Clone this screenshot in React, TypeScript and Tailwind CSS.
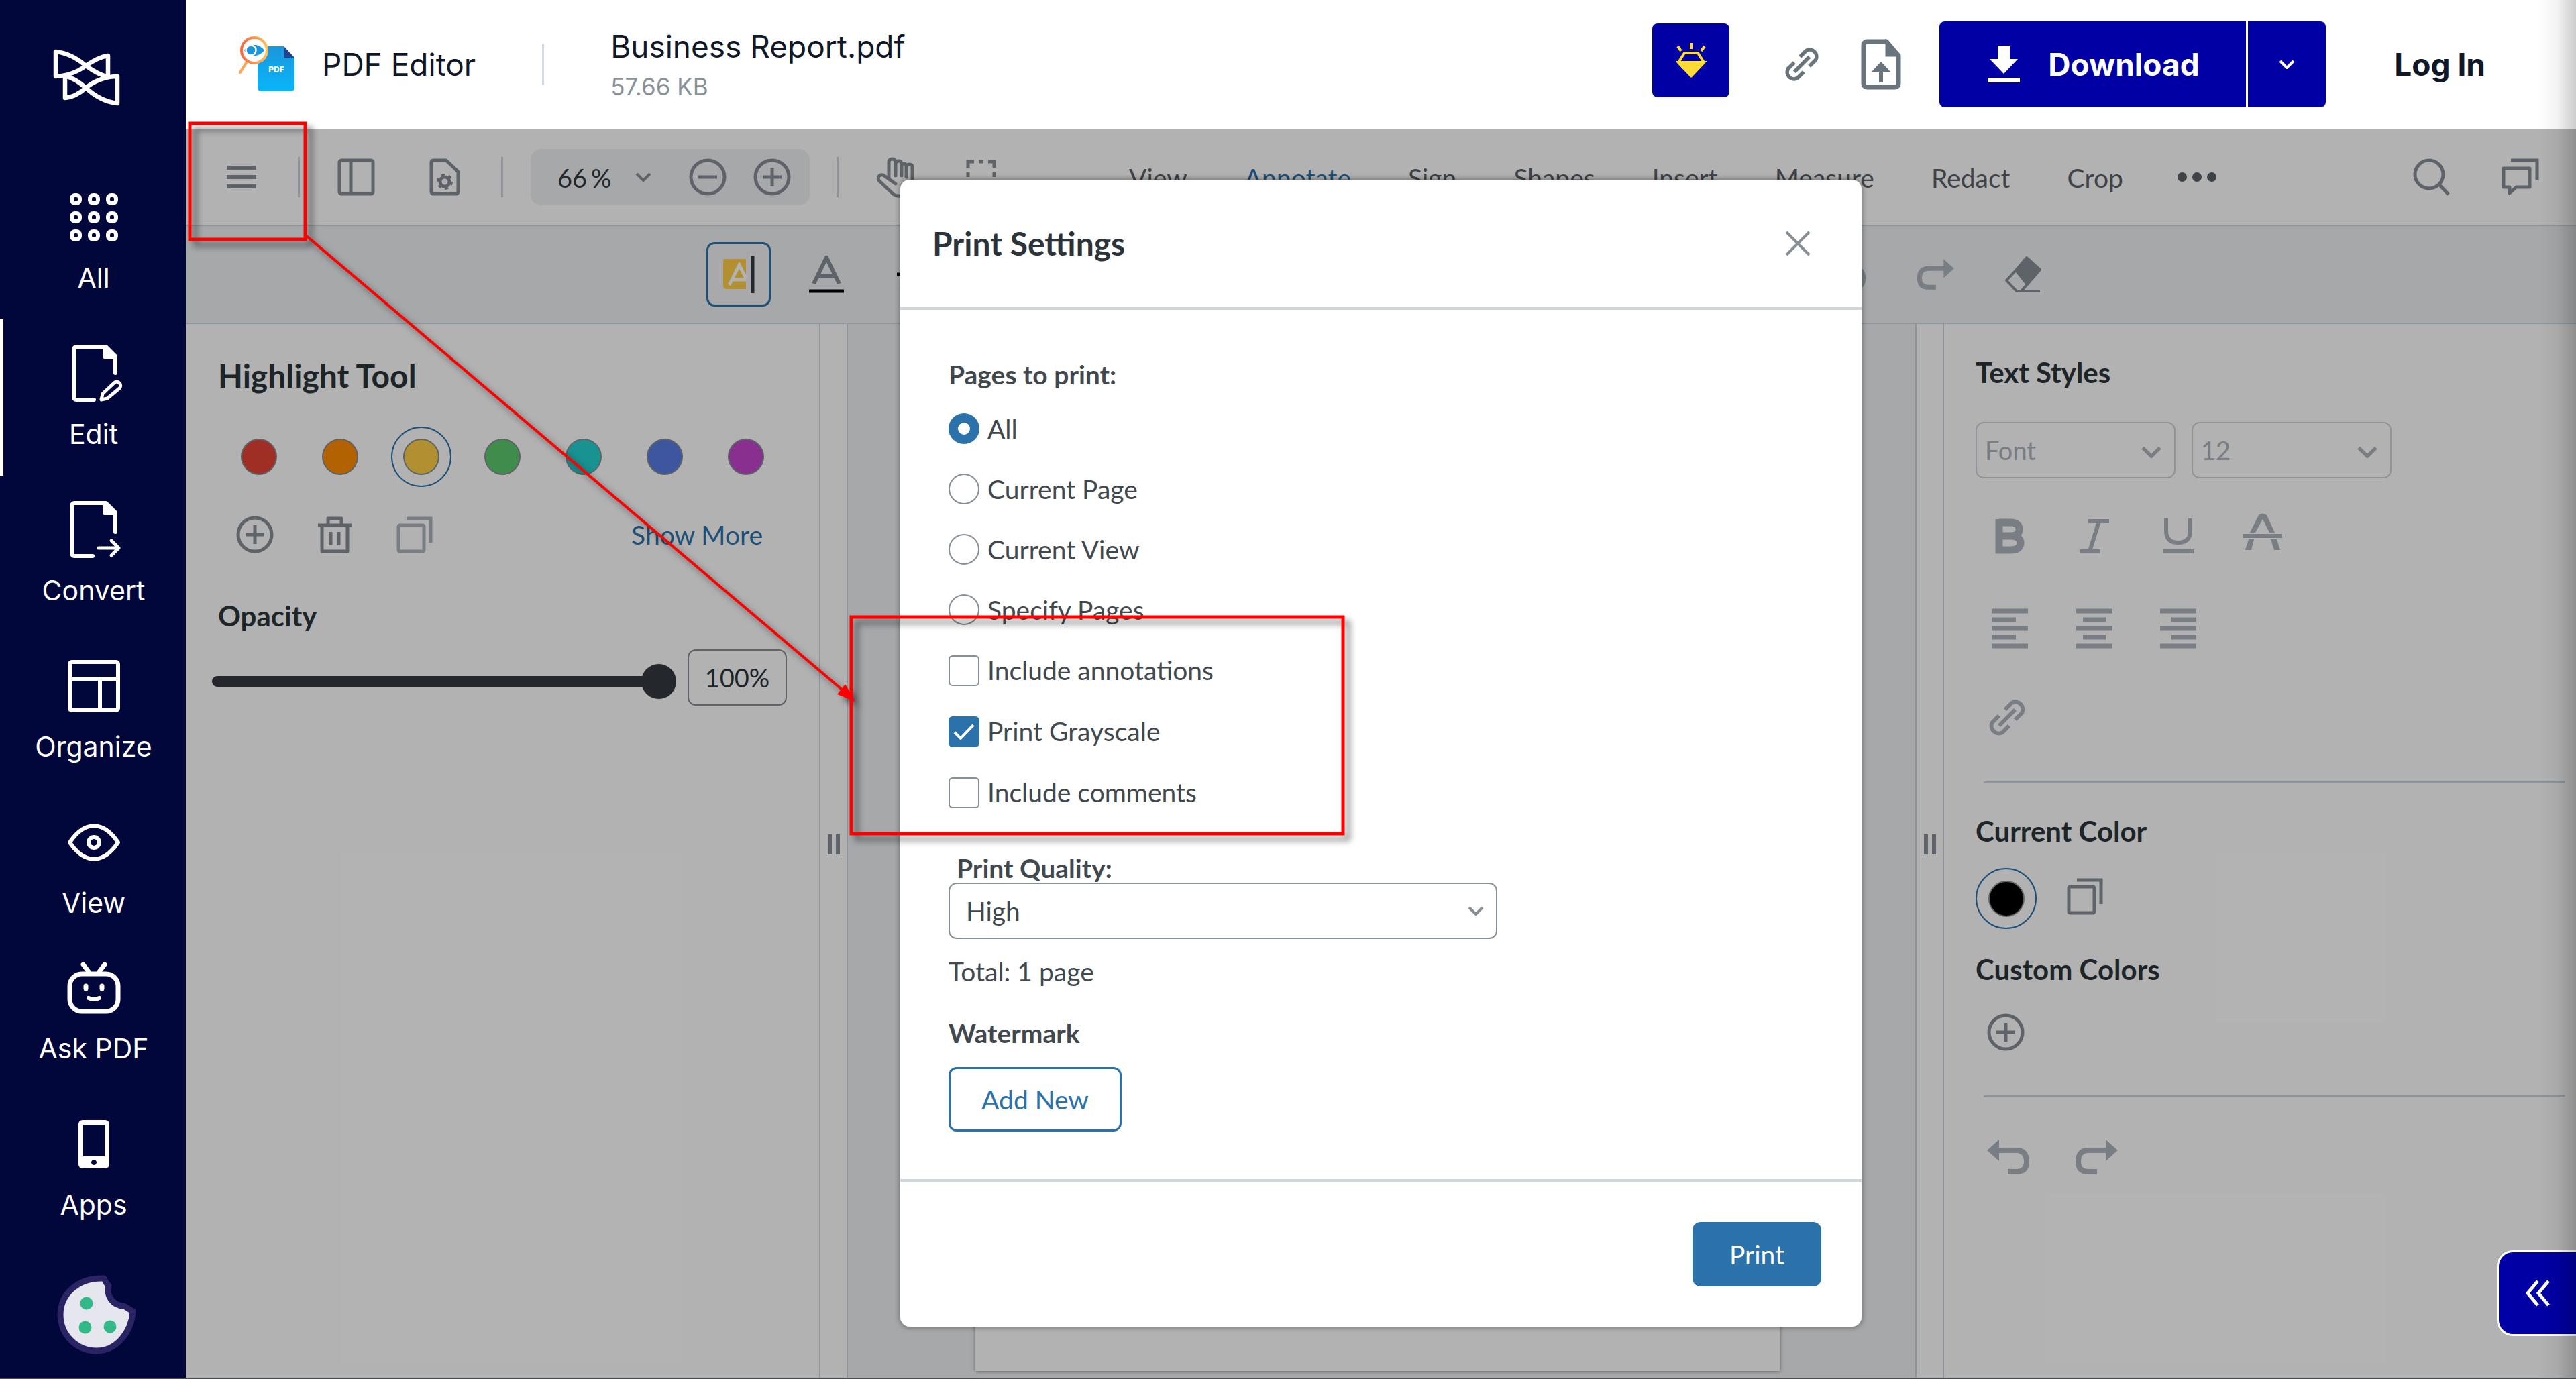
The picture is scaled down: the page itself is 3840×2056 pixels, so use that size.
import React, { useState } from 'react';

type IconProps = { className?: string };

const LogoMark = () => (
  <svg className="h-[85px] w-[100px]" viewBox="0 0 100 85" fill="none" stroke="white" strokeWidth="6.5" strokeLinejoin="round">
    <path d="M4 4C22 6 36 14 49 25C60 33 71 39 82 42V10C69 12 59 18 49 25C36 35 20 40 4 41Z" />
    <path d="M96 81C78 79 62 70 49 58C40 50 29 43 18 40V73C30 72 40 66 49 58C62 47 80 41 96 41Z" />
  </svg>
);

const GridIcon = () => (
  <svg className="size-[72px]" viewBox="0 0 72 72" fill="none" stroke="white" strokeWidth="6">
    {[9, 36, 63].map((y) =>
      [9, 36, 63].map((x) => <rect key={`${x}-${y}`} x={x - 6} y={y - 6} width="12" height="12" rx="5" />)
    )}
  </svg>
);

const EditIcon = () => (
  <svg className="h-[90px] w-[90px]" viewBox="-9 0 90 90" fill="none" stroke="white" strokeWidth="6" strokeLinecap="round" strokeLinejoin="round">
    <path d="M68 44V19L54 5H10a4 4 0 0 0-4 4V80a4 4 0 0 0 4 4H36" />
    <path d="M52 6V20H67Z" fill="white" />
    <path d="M47 84L49 75L66 59a5 5 0 0 1 8 8L56 82Z" strokeWidth="5" />
  </svg>
);

const ConvertIcon = () => (
  <svg className="h-[90px] w-[84px]" viewBox="-4 0 84 90" fill="none" stroke="white" strokeWidth="6" strokeLinecap="round" strokeLinejoin="round">
    <path d="M70 48V19L56 5H9a4 4 0 0 0-4 4V80a4 4 0 0 0 4 4H36" />
    <path d="M54 6V20H69Z" fill="white" />
    <path d="M45 72H75M64 61L75 72L64 83" strokeWidth="5" />
  </svg>
);

const OrganizeIcon = () => (
  <svg className="size-[78px]" viewBox="0 0 78 78" fill="none" stroke="white" strokeWidth="6">
    <rect x="3" y="3" width="72" height="72" rx="3" />
    <path d="M3 28H75M48 28V75" />
  </svg>
);

const EyeIcon = () => (
  <svg className="h-[56px] w-[80px]" viewBox="0 0 80 56" fill="none" stroke="white" strokeWidth="6" strokeLinejoin="round">
    <path d="M4 28C26 -5 54 -5 76 28C54 61 26 61 4 28Z" />
    <circle cx="40" cy="28" r="8" />
  </svg>
);

const BotIcon = () => (
  <svg className="size-[82px]" viewBox="0 0 82 82" fill="none" stroke="white" strokeWidth="7" strokeLinecap="round">
    <rect x="5" y="20" width="72" height="56" rx="18" />
    <path d="M25 6L34 18M57 6L48 18" />
    <path d="M29 38v4M53 38v4" />
    <path d="M33 56q8 4 16 0" strokeWidth="6" />
  </svg>
);

const PhoneIcon = () => (
  <svg className="h-[72px] w-[46px]" viewBox="0 0 46 72">
    <path fill="white" fillRule="evenodd" d="M6 0H40a6 6 0 0 1 6 6V66a6 6 0 0 1-6 6H6a6 6 0 0 1-6-6V6a6 6 0 0 1 6-6ZM7 7V54H39V7ZM23 59a4 4 0 1 0 .01 0Z" />
  </svg>
);

const CookieIcon = () => (
  <svg className="size-[120px]" viewBox="0 0 120 120">
    <path
      d="M71 6C72 8 73 12 78 17C74 32 84 46 100 47C104 48 108 52 114 55C112 86 90 114 60 114C30 114 6 90 6 60C6 30 32 4 71 6Z"
      fill="#e6e7ee" stroke="#2a2364" strokeWidth="9" strokeLinejoin="round"
    />
    <circle cx="45" cy="43" r="9.5" fill="#31ba87" />
    <circle cx="43" cy="79" r="9.5" fill="#31ba87" />
    <circle cx="80" cy="78" r="9.5" fill="#31ba87" />
  </svg>
);

const PdfEditorIcon = () => (
  <svg className="size-[84px]" viewBox="0 0 84 84">
    <defs>
      <linearGradient id="doc" x1="0" y1="0" x2="0" y2="1">
        <stop offset="0" stopColor="#1c96dc" />
        <stop offset="1" stopColor="#08b6f8" />
      </linearGradient>
      <linearGradient id="lens" x1="0" y1="0" x2="1" y2="0">
        <stop offset="0" stopColor="#f9693f" />
        <stop offset="1" stopColor="#fbc05e" />
      </linearGradient>
    </defs>
    <path d="M30 15H67L83 32V77a5 5 0 0 1-5 5H33a5 5 0 0 1-5-5V17Z" fill="url(#doc)" />
    <path d="M67 15L83 32H69a2 2 0 0 1-2-2Z" fill="#1f4391" />
    <text x="56" y="54" textAnchor="middle" fontSize="12" fontWeight="800" fill="white" fontFamily="Inter, sans-serif">PDF</text>
    <path d="M12 38L2 54" stroke="#fba558" strokeWidth="4" strokeLinecap="round" />
    <circle cx="23" cy="21" r="19" fill="white" stroke="url(#lens)" strokeWidth="4" />
    <path d="M8 21C14 10 30 10 38 21C30 32 14 32 8 21Z" fill="#1a96dc" />
    <circle cx="18" cy="21" r="7.5" fill="#1a96dc" stroke="white" strokeWidth="2.5" />
  </svg>
);

const BulbIcon = () => (
  <svg className="h-[52px] w-[46px]" viewBox="0 0 46 52" fill="none" stroke="#ffdb33" strokeWidth="4">
    <path d="M13 15H33L42 29L23 49L4 29Z" strokeLinejoin="round" />
    <path d="M4 29H42L23 49Z" fill="#ffdb33" />
    <path d="M23 0V9M3 5L8 12M43 5L38 12" />
  </svg>
);

const LinkIcon = ({ className }: IconProps) => (
  <svg className={className} viewBox="0 0 60 60" fill="none" stroke="currentColor" strokeWidth="6">
    <path d="M27 18L37 8a11 11 0 0 1 15 15L42 33" />
    <path d="M33 42L23 52a11 11 0 0 1-15-15L18 27" />
    <path d="M18 42L42 18" />
  </svg>
);

const UploadIcon = () => (
  <svg className="h-[76px] w-[60px]" viewBox="0 0 60 76" fill="none" stroke="#69747c" strokeWidth="7">
    <path d="M38 4H9a5 5 0 0 0-5 5V67a5 5 0 0 0 5 5H51a5 5 0 0 0 5-5V25Z" strokeLinejoin="round" />
    <path d="M38 3V25H56Z" fill="#69747c" strokeWidth="3" />
    <path d="M30 65V42" strokeWidth="6" />
    <path d="M15 50L30 34L45 50Z" fill="#69747c" stroke="none" />
  </svg>
);

const DownloadIcon = () => (
  <svg className="h-[56px] w-[48px]" viewBox="0 0 48 56" fill="white">
    <path d="M15 0H33V20H45L24 42L3 20H15ZM0 48H48V55H0Z" />
  </svg>
);

const Chevron = ({ className }: IconProps) => (
  <svg className={className} viewBox="0 0 24 14" fill="none" stroke="currentColor" strokeWidth="4">
    <path d="M2 2L12 12L22 2" />
  </svg>
);

const MenuIcon = () => (
  <svg className="size-14" viewBox="0 0 56 56" fill="none" stroke="#868e96" strokeWidth="6">
    <path d="M6 14H50M6 28H50M6 42H50" />
  </svg>
);

const PanelIcon = () => (
  <svg className="size-14" viewBox="0 0 56 56" fill="none" stroke="#868e96" strokeWidth="5">
    <rect x="3" y="3" width="50" height="50" rx="3" />
    <path d="M20 3V53" />
  </svg>
);

const PageSettingsIcon = () => (
  <svg className="size-14" viewBox="0 0 56 56" fill="none" stroke="#868e96" strokeWidth="5">
    <path d="M30 3H11a3 3 0 0 0-3 3V50a3 3 0 0 0 3 3H45a3 3 0 0 0 3-3V20Z" strokeLinejoin="round" />
    <circle cx="28" cy="35" r="7" />
    <circle cx="28" cy="35" r="10" strokeWidth="4" strokeDasharray="5 5.47" />
  </svg>
);

const CirclePlusIcon = () => (
  <svg className="size-14" viewBox="0 0 56 56" fill="none" stroke="#868e96" strokeWidth="5">
    <circle cx="28" cy="28" r="25" />
    <path d="M28 14V42M14 28H42" />
  </svg>
);

const CircleMinusIcon = () => (
  <svg className="size-14" viewBox="0 0 56 56" fill="none" stroke="#868e96" strokeWidth="5">
    <circle cx="28" cy="28" r="25" />
    <path d="M14 28H42" />
  </svg>
);

const HandIcon = () => (
  <svg className="h-[62px] w-[56px]" viewBox="0 0 56 62" fill="none" stroke="#868e96" strokeWidth="5" strokeLinecap="round" strokeLinejoin="round">
    <path d="M28 41L11 29a5 5 0 0 0-7 8L22 54q5 6 14 5q17-1 17-19V16q0-4-4-4t-5 4v15M18 33V9q0-5 5-5t5 5v20M28 11q1-4 5-4q4 0 4 6v16M37 14q0-3 4-3q3 0 3 5" />
  </svg>
);

const MarqueeIcon = () => (
  <svg className="size-14" viewBox="0 0 56 56" fill="none" stroke="#868e96" strokeWidth="5">
    <path d="M3 14V5H12M19 5H26M33 5H42V14M42 21V28M42 35V44H33M26 44H19M12 44H3V35M3 28V21" />
  </svg>
);

const SearchIcon = () => (
  <svg className="size-14" viewBox="0 0 56 56" fill="none" stroke="#868e96" strokeWidth="5">
    <circle cx="24" cy="24" r="21" />
    <path d="M39 39L53 54" />
  </svg>
);

const CommentsIcon = () => (
  <svg className="size-14" viewBox="0 0 56 56" fill="none" stroke="#868e96" strokeWidth="5" strokeLinejoin="round">
    <path d="M3 15H42V43H22L12 52V43H3Z" />
    <path d="M14 3H53V33" strokeLinejoin="miter" />
  </svg>
);

const HighlightIcon = () => (
  <svg className="size-14" viewBox="0 0 56 56">
    <path d="M8 5H39V50H10a5 5 0 0 1-5-5V8a3 3 0 0 1 3-3Z" fill="#ffcd45" />
    <path d="M14 44L29 14L39 34M19 36H39" fill="none" stroke="white" strokeWidth="5" />
    <path d="M49 0V56" stroke="#343a40" strokeWidth="5" />
  </svg>
);

const UnderlineIcon = () => (
  <svg className="size-14" viewBox="0 0 56 56" fill="none">
    <path d="M9 42L28 3L47 42M16 31H40" stroke="#868e96" strokeWidth="6" />
    <path d="M2 53H54" stroke="black" strokeWidth="5" />
  </svg>
);

const StrikeIcon = () => (
  <svg className="size-14" viewBox="0 0 56 56" fill="none">
    <path d="M9 50L28 8L47 50" stroke="#868e96" strokeWidth="6" />
    <path d="M2 28H54" stroke="black" strokeWidth="5" />
  </svg>
);

const EraserIcon = () => (
  <svg className="size-14" viewBox="0 0 56 56" fill="none" stroke="#868e96" strokeWidth="4" strokeLinejoin="round">
    <path d="M33 3L53 21L34 43L17 22Z" fill="#868e96" />
    <path d="M17 22L3 37L18 53H25L34 43M18 53H53" />
  </svg>
);

const UndoIcon = ({ className }: IconProps) => (
  <svg className={className} viewBox="0 0 64 64" fill="none" stroke="#adb5bd" strokeWidth="8">
    <path d="M14 22H44Q59 22 59 39Q59 54 44 54H31" />
    <path d="M0 22L18 6V38Z" fill="#adb5bd" stroke="none" />
  </svg>
);

const RedoIcon = ({ className }: IconProps) => (
  <svg className={className} viewBox="0 0 64 64" fill="none" stroke="#adb5bd" strokeWidth="8">
    <path d="M50 22H20Q5 22 5 39Q5 54 20 54H33" />
    <path d="M64 22L46 6V38Z" fill="#adb5bd" stroke="none" />
  </svg>
);

const TrashIcon = () => (
  <svg className="size-14" viewBox="0 0 56 56" fill="none" stroke="#868e96" strokeWidth="5">
    <path d="M3 14H53M18 14V4H38V14M9 14V53H47V14M22 24V44M34 24V44" strokeLinejoin="round" />
  </svg>
);

const CopyIcon = ({ className }: IconProps) => (
  <svg className={className} viewBox="0 0 56 56" fill="none" stroke="currentColor" strokeWidth="5">
    <rect x="4" y="14" width="38" height="39" rx="2" />
    <path d="M16 4H52V40" />
  </svg>
);

const GripIcon = () => (
  <svg className="h-[30px] w-[18px]" viewBox="0 0 18 30" stroke="#868e96" strokeWidth="6">
    <path d="M3 0V30M15 0V30" />
  </svg>
);

const BoldIcon = () => (
  <svg className="size-[60px]" viewBox="0 0 60 60" fill="none" stroke="#adb5bd" strokeWidth="11">
    <path d="M14 10H31Q44 10 44 20Q44 30 31 30H14M31 30Q46 30 46 40Q46 51 31 51H14V5" />
  </svg>
);

const ItalicIcon = () => (
  <svg className="size-[60px]" viewBox="0 0 60 60" fill="none" stroke="#adb5bd" strokeWidth="6">
    <path d="M21 8H52M8 53H39M37 8L23 53" />
  </svg>
);

const TextUnderlineIcon = () => (
  <svg className="size-[60px]" viewBox="0 0 60 60" fill="none" stroke="#adb5bd" strokeWidth="6">
    <path d="M11 4V22Q11 40 29 40Q47 40 47 22V4M6 53H52" />
  </svg>
);

const TextStrikeIcon = () => (
  <svg className="size-[60px] overflow-visible" viewBox="0 0 60 60" fill="#adb5bd">
    <path d="M10 25L23 -1Q29 -6 35 -1L47 25H39L29 5L18 25Z" />
    <path d="M8 35H16L12 51H3ZM41 35H50L55 51H46Z" />
    <path d="M0 27H58V33H0Z" />
  </svg>
);

const AlignLeftIcon = () => (
  <svg className="size-[60px]" viewBox="0 0 60 60" stroke="#adb5bd" strokeWidth="7">
    <path d="M3 4H57M3 17H39M3 30H57M3 43H39M3 56H57" />
  </svg>
);

const AlignCenterIcon = () => (
  <svg className="size-[60px]" viewBox="0 0 60 60" stroke="#adb5bd" strokeWidth="7">
    <path d="M3 4H57M13 17H47M3 30H57M13 43H47M3 56H57" />
  </svg>
);

const AlignRightIcon = () => (
  <svg className="size-[60px]" viewBox="0 0 60 60" stroke="#adb5bd" strokeWidth="7">
    <path d="M2 4H56M19 17H56M2 30H56M19 43H56M2 56H56" />
  </svg>
);

const navItems = [
  { label: 'All', icon: <GridIcon /> },
  { label: 'Edit', icon: <EditIcon />, active: true },
  { label: 'Convert', icon: <ConvertIcon /> },
  { label: 'Organize', icon: <OrganizeIcon /> },
  { label: 'View', icon: <EyeIcon />, short: true },
  { label: 'Ask PDF', icon: <BotIcon /> },
  { label: 'Apps', icon: <PhoneIcon /> },
];

const Sidebar = () => (
  <nav className="flex w-[277px] shrink-0 flex-col items-center bg-[#01063b] text-white">
    <a href="#home" aria-label="Home" className="mt-[73px] mr-5 mb-[85px]">
      <LogoMark />
    </a>
    {navItems.map((item) => (
      <a
        key={item.label}
        href={`#${item.label}`}
        className={`flex w-full flex-col items-center gap-5 border-l-[5px] pt-9 pr-[3px] ${item.active ? 'border-white' : 'border-transparent'} ${item.short ? 'h-[217px]' : 'h-[233px]'}`}
      >
        <span className="flex h-[90px] items-center">{item.icon}</span>
        <span className="text-[41px] leading-[50px]">{item.label}</span>
      </a>
    ))}
    <button aria-label="Cookie settings" className="mt-[42px] ml-[10px]">
      <CookieIcon />
    </button>
  </nav>
);

const Header = () => (
  <header className="flex h-48 shrink-0 items-center bg-white pl-[79px] text-[#101828]">
    <PdfEditorIcon />
    <h1 className="ml-10 text-[46px] leading-[60px]">PDF Editor</h1>
    <div className="mx-[99px] h-[60px] w-[3px] bg-[#cfdbe6]" />
    <div className="pt-[6px]">
      <p className="text-[46px] leading-[60px]">Business Report.pdf</p>
      <p className="text-[35px] leading-[60px] text-[#8a9299]">57.66 KB</p>
    </div>
    <button aria-label="Tips" className="mr-20 mb-3 ml-auto flex h-[110px] w-[115px] items-center justify-center rounded-lg bg-[#0000a4]">
      <BulbIcon />
    </button>
    <button aria-label="Copy link" className="mr-[60px] text-[#69747c]">
      <LinkIcon className="size-14" />
    </button>
    <button aria-label="Upload" className="mr-[57px]">
      <UploadIcon />
    </button>
    <div className="flex h-32 gap-[3px]">
      <button className="flex w-[457px] items-center gap-[42px] rounded-l-lg bg-[#0000a4] pl-[72px] text-[46px] font-bold text-white">
        <DownloadIcon />
        Download
      </button>
      <button aria-label="More download options" className="flex w-[116px] items-center justify-center rounded-r-lg bg-[#0000a4] text-white">
        <Chevron className="h-[14px] w-6" />
      </button>
    </div>
    <a href="#login" className="mr-[135px] ml-[102px] text-[46px] font-bold">Log In</a>
  </header>
);

const tabs = ['View', 'Annotate', 'Sign', 'Shapes', 'Insert', 'Measure', 'Redact', 'Crop'];

const Divider = () => <div className="h-[60px] w-[3px] bg-[#ccd5dc]" />;

const MainToolbar = () => {
  const [zoom, setZoom] = useState('66');

  return (
    <div className="flex h-[145px] shrink-0 items-center border-b-2 border-[#ccd5dc] bg-white pr-[55px] pl-[55px]">
      <div className="flex items-center gap-14">
        <button aria-label="Menu"><MenuIcon /></button>
        <Divider />
        <button aria-label="Panel" className="mr-5"><PanelIcon /></button>
        <button aria-label="Page settings"><PageSettingsIcon /></button>
        <Divider />
      </div>
      <div className="mr-10 ml-[41px] flex h-[84px] w-[416px] items-center rounded-2xl bg-[#eff1f4] pl-10 text-[38px] text-[#343a40]">
        <input aria-label="Zoom" value={zoom} onChange={(e) => setZoom(e.target.value)} className="w-[50px] bg-transparent pt-1" />
        <span className="pt-1">%</span>
        <button aria-label="Zoom levels" className="ml-9 text-[#868e96]"><Chevron className="h-[14px] w-6" /></button>
        <button aria-label="Zoom out" className="ml-auto"><CircleMinusIcon /></button>
        <button aria-label="Zoom in" className="mr-7 ml-10"><CirclePlusIcon /></button>
      </div>
      <Divider />
      <button aria-label="Pan" className="ml-[57px]"><HandIcon /></button>
      <button aria-label="Marquee" className="ml-[77px]"><MarqueeIcon /></button>
      <nav className="ml-[187px] flex items-center gap-[85px] text-[39px] text-[#5a6067]">
        {tabs.map((tab) => (
          <button key={tab} className={`pt-1 ${tab === 'Annotate' ? 'text-[#2b72ab]' : ''}`}>{tab}</button>
        ))}
        <button aria-label="More" className="-ml-1 flex gap-2">
          <span className="size-[14px] rounded-full bg-[#5a6067]" />
          <span className="size-[14px] rounded-full bg-[#5a6067]" />
          <span className="size-[14px] rounded-full bg-[#5a6067]" />
        </button>
      </nav>
      <div className="ml-auto flex gap-[76px]">
        <button aria-label="Search"><SearchIcon /></button>
        <button aria-label="Comments"><CommentsIcon /></button>
      </div>
    </div>
  );
};

const AnnotateToolbar = () => (
  <div className="flex h-[146px] shrink-0 items-center justify-center border-b-2 border-[#ccd5dc] bg-[#eff1f4]">
    <div className="flex w-[2011px] justify-between">
      <div className="flex gap-[35px]">
        <button aria-label="Highlight" className="flex size-24 items-center justify-center rounded-xl border-3 border-[#2b72ab] bg-white/20">
          <HighlightIcon />
        </button>
        <button aria-label="Underline" className="flex size-24 items-center justify-center"><UnderlineIcon /></button>
        <button aria-label="Strikeout" className="flex size-24 items-center justify-center"><StrikeIcon /></button>
      </div>
      <div className="flex gap-[35px]">
        <button aria-label="Undo" className="flex size-24 items-center justify-center"><UndoIcon className="size-14" /></button>
        <button aria-label="Redo" className="flex size-24 items-center justify-center"><RedoIcon className="size-14" /></button>
        <button aria-label="Eraser" className="flex size-24 items-center justify-center"><EraserIcon /></button>
      </div>
    </div>
  </div>
);

const swatches = [
  { name: 'Red', color: 'bg-[#e44234]' },
  { name: 'Orange', color: 'bg-[#ff8d00]' },
  { name: 'Yellow', color: 'bg-[#ffcd45]' },
  { name: 'Green', color: 'bg-[#5cc96e]' },
  { name: 'Teal', color: 'bg-[#25d2d1]' },
  { name: 'Blue', color: 'bg-[#597ce2]' },
  { name: 'Purple', color: 'bg-[#c544ce]' },
];

const StylePanel = () => {
  const [selected, setSelected] = useState('Yellow');
  const [opacity, setOpacity] = useState(100);

  return (
    <aside className="w-[944px] shrink-0 bg-white pt-[47px] text-[#2c353b]">
      <h2 className="pl-12 text-[48px] leading-[60px] font-bold">Highlight Tool</h2>
      <div className="mt-[46px] flex gap-[31px] pl-16">
        {swatches.map((s) => (
          <button
            key={s.name}
            aria-label={s.name}
            onClick={() => setSelected(s.name)}
            className={`flex size-[90px] items-center justify-center rounded-full border-2 ${selected === s.name ? 'border-[#2b72ab]' : 'border-transparent'}`}
          >
            <span className={`size-[54px] rounded-full border-2 border-[#868e96] ${s.color}`} />
          </button>
        ))}
      </div>
      <div className="mt-[43px] flex items-center gap-[63px] pr-[84px] pl-[75px]">
        <button aria-label="Add color"><CirclePlusIcon /></button>
        <button aria-label="Delete color"><TrashIcon /></button>
        <button aria-label="Copy color" className="text-[#adb5bd]"><CopyIcon className="size-14" /></button>
        <button className="ml-auto text-[39px] leading-[56px] text-[#2b72ab]">Show More</button>
      </div>
      <label htmlFor="opacity" className="mt-[65px] block pl-12 text-[42px] leading-[56px] font-bold">Opacity</label>
      <div className="mt-[22px] flex items-center gap-[17px] pl-[39px]">
        <input
          id="opacity"
          type="range"
          min={0}
          max={100}
          value={opacity}
          onChange={(e) => setOpacity(Number(e.target.value))}
          className="mt-3 h-[52px] w-[692px] appearance-none bg-transparent [&::-webkit-slider-runnable-track]:h-4 [&::-webkit-slider-runnable-track]:rounded-full [&::-webkit-slider-runnable-track]:bg-[#343a40] [&::-webkit-slider-thumb]:-mt-[18px] [&::-webkit-slider-thumb]:size-[52px] [&::-webkit-slider-thumb]:appearance-none [&::-webkit-slider-thumb]:rounded-full [&::-webkit-slider-thumb]:bg-[#343a40]"
        />
        <input
          aria-label="Opacity value"
          value={`${opacity}%`}
          onChange={(e) => setOpacity(parseInt(e.target.value) || 0)}
          className="h-[84px] w-[148px] rounded-xl border-2 border-[#868e96] text-center text-[38px]"
        />
      </div>
    </aside>
  );
};

const Splitter = () => (
  <div className="flex w-[43px] shrink-0 items-center justify-center border-x-2 border-[#ccd5dc] bg-white pb-5">
    <GripIcon />
  </div>
);

const TextPanel = () => (
  <aside className="w-[942px] shrink-0 bg-white pt-11 pl-[47px] text-[#2c353b]">
    <h2 className="text-[42px] leading-[56px] font-bold">Text Styles</h2>
    <div className="mt-[46px] flex gap-6 text-[38px] text-[#adb5bd]">
      <div className="relative">
        <select aria-label="Font" className="h-[84px] w-[298px] appearance-none rounded-xl border-2 border-[#ccd5dc] pl-3">
          <option>Font</option>
        </select>
        <Chevron className="pointer-events-none absolute top-9 right-5 h-[18px] w-8" />
      </div>
      <div className="relative">
        <select aria-label="Font size" className="h-[84px] w-[298px] appearance-none rounded-xl border-2 border-[#ccd5dc] pl-3">
          <option>12</option>
        </select>
        <Chevron className="pointer-events-none absolute top-9 right-5 h-[18px] w-8" />
      </div>
    </div>
    <div className="mt-14 flex gap-[66px] pl-[21px]">
      <button aria-label="Bold"><BoldIcon /></button>
      <button aria-label="Italic"><ItalicIcon /></button>
      <button aria-label="Underline text"><TextUnderlineIcon /></button>
      <button aria-label="Strike text"><TextStrikeIcon /></button>
    </div>
    <div className="mt-[78px] flex gap-[66px] pl-[21px]">
      <button aria-label="Align left"><AlignLeftIcon /></button>
      <button aria-label="Align center"><AlignCenterIcon /></button>
      <button aria-label="Align right"><AlignRightIcon /></button>
    </div>
    <div className="mt-[73px] flex pl-[17px]">
      <button aria-label="Link" className="text-[#adb5bd]"><LinkIcon className="size-[60px]" /></button>
    </div>
    <hr className="mt-[65px] mr-4 ml-3 border-t-3 border-[#ccd5dc]" />
    <h2 className="mt-[43px] text-[42px] leading-[56px] font-bold">Current Color</h2>
    <div className="mt-[27px] flex items-center gap-[44px]">
      <button aria-label="Current color" className="flex size-[91px] items-center justify-center rounded-full border-2 border-[#2b72ab]">
        <span className="size-[54px] rounded-full border-2 border-[#868e96] bg-black" />
      </button>
      <button aria-label="Copy current color" className="mb-2 text-[#868e96]"><CopyIcon className="size-14" /></button>
    </div>
    <h2 className="mt-[32px] text-[42px] leading-[56px] font-bold">Custom Colors</h2>
    <div className="mt-[38px] flex pl-[17px]">
      <button aria-label="Add custom color"><CirclePlusIcon /></button>
    </div>
    <hr className="mt-[66px] mr-4 ml-3 border-t-3 border-[#ccd5dc]" />
    <div className="mt-[57px] flex gap-[67px] pl-[17px]">
      <button aria-label="Undo edit"><UndoIcon className="size-16" /></button>
      <button aria-label="Redo edit"><RedoIcon className="size-16" /></button>
    </div>
  </aside>
);

const pageChoices = ['All', 'Current Page', 'Current View', 'Specify Pages'];

const PrintDialog = () => {
  const [pages, setPages] = useState('All');
  const [options, setOptions] = useState<Record<string, boolean>>({
    'Include annotations': false,
    'Print Grayscale': true,
    'Include comments': false,
  });

  return (
    <div role="dialog" aria-label="Print Settings" className="w-[1433px] rounded-[14px] bg-white text-[39px] text-[#41484e] shadow-[0_0_8px_rgba(0,0,0,0.5)]">
      <div className="flex h-[194px] items-center justify-between border-b-4 border-[#ced6db] pr-[76px] pl-12">
        <h2 className="text-[48px] leading-[60px] font-bold text-[#2c343a]">Print Settings</h2>
        <button aria-label="Close" className="text-[#868e96]">
          <svg className="size-[38px]" viewBox="0 0 38 38" stroke="currentColor" strokeWidth="4">
            <path d="M2 2L36 36M36 2L2 36" />
          </svg>
        </button>
      </div>
      <form className="px-[72px] pt-[72px] pb-[71px]">
        <p className="mb-3 leading-[48px] font-bold">Pages to print:</p>
        {pageChoices.map((choice) => (
          <label key={choice} className="flex h-[90px] items-center gap-3">
            <input
              type="radio"
              name="pages"
              checked={pages === choice}
              onChange={() => setPages(choice)}
              className="size-[46px] appearance-none rounded-full border-2 border-[#868e96] checked:border-[14px] checked:border-[#2b72ab]"
            />
            {choice}
          </label>
        ))}
        {Object.keys(options).map((name) => (
          <label key={name} className="flex h-[91px] items-center gap-3">
            <span className="relative flex">
              <input
                type="checkbox"
                checked={options[name]}
                onChange={() => setOptions((prev) => ({ ...prev, [name]: !prev[name] }))}
                className="size-[46px] appearance-none rounded-md border-2 border-[#868e96] checked:border-[#2b72ab] checked:bg-[#2b72ab]"
              />
              {options[name] && (
                <svg className="pointer-events-none absolute inset-0 size-[46px]" viewBox="0 0 46 46" fill="none" stroke="white" strokeWidth="4">
                  <path d="M9 24L18 33L37 13" />
                </svg>
              )}
            </span>
            {name}
          </label>
        ))}
        <label htmlFor="quality" className="mt-[45px] ml-3 block leading-[44px] font-bold">Print Quality:</label>
        <div className="relative w-[818px]">
          <select id="quality" className="block h-[84px] w-full appearance-none rounded-xl border-2 border-[#868e96] pl-6">
            <option>High</option>
          </select>
          <Chevron className="pointer-events-none absolute top-[35px] right-5 h-[14px] w-6 text-[#868e96]" />
        </div>
        <p className="mt-6 leading-[48px]">Total: 1 page</p>
        <p className="mt-11 leading-[48px] font-bold">Watermark</p>
        <button type="button" className="mt-[27px] block h-24 w-[258px] rounded-xl border-3 border-[#2b72ab] text-[#2b72ab]">
          Add New
        </button>
      </form>
      <div className="flex h-[220px] items-center justify-end border-t-4 border-[#ced6db] pr-[60px]">
        <button className="h-24 w-48 rounded-xl bg-[#2b72ab] text-white">Print</button>
      </div>
    </div>
  );
};

// Red call-outs that link the menu button to the print options
const Callouts = () => (
  <svg className="pointer-events-none absolute inset-0 h-full w-full drop-shadow-[8px_8px_5px_rgba(0,0,0,0.5)]" fill="none" stroke="#ff0000" strokeWidth="5">
    <rect x="283" y="184" width="172" height="173" />
    <rect x="1269" y="920" width="733" height="323" />
    <path d="M457 352L1262 1034" strokeWidth="4" />
    <path d="M1275 1046L1248 1035L1260 1020Z" fill="#ff0000" stroke="none" />
  </svg>
);

const App: React.FC = () => {
  return (
    <div className="relative flex h-screen flex-col overflow-hidden bg-[#4a4c4e] pb-[2px] font-[Lato,sans-serif]">
      <div className="flex min-h-0 flex-1">
        <div className="flex shrink-0 font-[Inter,sans-serif]">
          <Sidebar />
        </div>
        <div className="relative flex min-w-0 flex-1 flex-col">
          <div className="font-[Inter,sans-serif]">
            <Header />
          </div>
          <div className="relative flex min-h-0 flex-1 flex-col">
            <MainToolbar />
            <AnnotateToolbar />
            <div className="flex min-h-0 flex-1">
              <StylePanel />
              <Splitter />
              <main className="flex min-w-0 flex-1 justify-center bg-[#eff1f4] pt-8 pr-3 pb-[10px]">
                <div className="w-[1199px] bg-white shadow-[0_0_6px_rgba(0,0,0,0.5)]" />
              </main>
              <Splitter />
              <TextPanel />
            </div>
            <div className="absolute inset-0 flex items-center justify-center bg-black/30">
              <PrintDialog />
            </div>
            <button aria-label="Expand panel" className="absolute right-0 bottom-[62px] flex h-32 w-[118px] items-center justify-center rounded-l-3xl border-3 border-r-0 border-white bg-[#0000a4]">
              <svg className="h-10 w-9" viewBox="0 0 36 40" fill="none" stroke="white" strokeWidth="5">
                <path d="M18 2L3 20L18 38M34 2L19 20L34 38" />
              </svg>
            </button>
          </div>
          <div className="pointer-events-none absolute inset-y-0 right-0 w-14 bg-linear-to-l from-black/20 via-black/5 to-transparent" />
        </div>
      </div>
      <Callouts />
    </div>
  );
};

export default App;
